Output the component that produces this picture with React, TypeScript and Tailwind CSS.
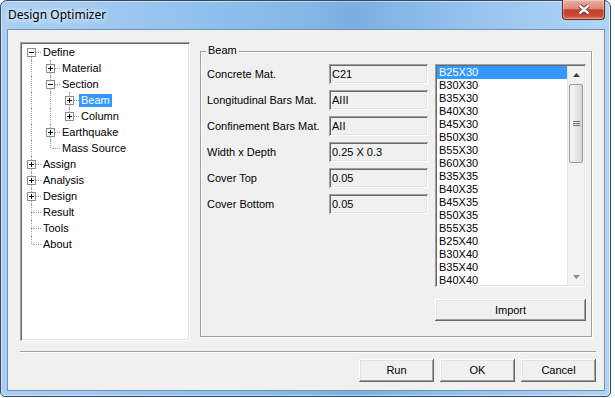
import React from 'react';

const ui = "font-['Liberation_Sans',Arial,sans-serif] text-[11px] text-black";
const sunken =
  'shadow-[inset_1px_1px_0_#a0a0a0,inset_-1px_-1px_0_#ffffff,inset_2px_2px_0_#696969,inset_-2px_-2px_0_#e3e3e3]';
const raised =
  'shadow-[inset_-1px_-1px_0_#696969,inset_1px_1px_0_#ffffff,inset_-2px_-2px_0_#a0a0a0,inset_2px_2px_0_#e3e3e3]';

type Row = {
  label: string;
  level: number;
  exp?: '+' | '-';
  cont: boolean[];
  up: boolean;
  down: boolean;
  sel?: boolean;
};

const rows: Row[] = [
  { label: 'Define', level: 0, exp: '-', cont: [], up: false, down: true },
  { label: 'Material', level: 1, exp: '+', cont: [true], up: true, down: true },
  { label: 'Section', level: 1, exp: '-', cont: [true], up: true, down: true },
  { label: 'Beam', level: 2, exp: '+', cont: [true, true], up: true, down: true, sel: true },
  { label: 'Column', level: 2, exp: '+', cont: [true, true], up: true, down: false },
  { label: 'Earthquake', level: 1, exp: '+', cont: [true], up: true, down: true },
  { label: 'Mass Source', level: 1, cont: [true], up: true, down: false },
  { label: 'Assign', level: 0, exp: '+', cont: [], up: true, down: true },
  { label: 'Analysis', level: 0, exp: '+', cont: [], up: true, down: true },
  { label: 'Design', level: 0, exp: '+', cont: [], up: true, down: true },
  { label: 'Result', level: 0, cont: [], up: true, down: true },
  { label: 'Tools', level: 0, cont: [], up: true, down: true },
  { label: 'About', level: 0, cont: [], up: true, down: false },
];

const fields = [
  ['Concrete Mat.', 'C21'],
  ['Longitudinal Bars Mat.', 'AIII'],
  ['Confinement Bars Mat.', 'AII'],
  ['Width x Depth', '0.25 X 0.3'],
  ['Cover Top', '0.05'],
  ['Cover Bottom', '0.05'],
];

const sections = [
  'B25X30', 'B30X30', 'B35X30', 'B40X30', 'B45X30', 'B50X30', 'B55X30', 'B60X30',
  'B35X35', 'B40X35', 'B45X35', 'B50X35', 'B55X35', 'B25X40', 'B30X40', 'B35X40', 'B40X40',
];

function Expander({ sign }: { sign: '+' | '-' }) {
  return (
    <span className="absolute left-[5px] top-[4px] w-[9px] h-[9px] border border-[#8c8c8c] bg-white">
      <span className="absolute left-[1px] top-[3px] w-[5px] h-[1px] bg-black" />
      {sign === '+' && <span className="absolute left-[3px] top-[1px] w-[1px] h-[5px] bg-black" />}
    </span>
  );
}

function TreeRow({ row }: { row: Row }) {
  return (
    <div className="flex h-[16px]">
      {row.cont.map((c, i) => (
        <div key={i} className="relative w-[19px] h-[16px] shrink-0">
          {c && <span className="absolute left-[9px] top-0 h-[16px] border-l border-dotted border-[#a0a0a0]" />}
        </div>
      ))}
      <div className="relative w-[19px] h-[16px] shrink-0">
        {row.up && <span className="absolute left-[9px] top-0 h-[8px] border-l border-dotted border-[#a0a0a0]" />}
        {row.down && <span className="absolute left-[9px] top-[8px] h-[8px] border-l border-dotted border-[#a0a0a0]" />}
        <span className="absolute left-[11px] top-[8px] w-[8px] border-t border-dotted border-[#a0a0a0]" />
        {row.exp && <Expander sign={row.exp} />}
      </div>
      <span
        className={
          'mt-[2px] h-[13px] leading-[13px] px-[2px] whitespace-nowrap ' +
          (row.sel ? 'bg-[#3399ff] text-white' : '')
        }
      >
        {row.label}
      </span>
    </div>
  );
}

function Tree() {
  return (
    <div className={`w-[170px] h-[299px] shrink-0 bg-white pt-[2px] pl-[2px] ${sunken}`}>
      {rows.map((r) => (
        <TreeRow key={r.label} row={r} />
      ))}
    </div>
  );
}

function Arrow({ up, color }: { up?: boolean; color: string }) {
  return (
    <svg width="7" height="4" viewBox="0 0 7 4">
      <polygon points={up ? '0,4 7,4 3.5,0' : '0,0 7,0 3.5,4'} fill={color} />
    </svg>
  );
}

function SectionList() {
  return (
    <div className={`h-[223px] flex bg-white p-[2px] ${sunken}`}>
      <div className="flex-1 overflow-hidden">
        {sections.map((s, i) => (
          <div
            key={s}
            className={'h-[13px] leading-[13px] pl-[2px] ' + (i === 0 ? 'bg-[#3399ff] text-white' : '')}
          >
            {s}
          </div>
        ))}
      </div>
      <div className="w-[17px] shrink-0 flex flex-col bg-[#f2f2f2] border-l border-[#e6e6e6]">
        <div className="h-[17px] flex items-center justify-center">
          <Arrow up color="#404040" />
        </div>
        <div className="mt-[1px] mx-[1px] h-[79px] rounded-[2px] border border-[#9a9a9a] bg-[linear-gradient(90deg,#f4f4f4_0%,#e8e8e8_50%,#d6d6d6_100%)] flex flex-col items-center justify-center gap-[1px]">
          <span className="w-[7px] h-[1px] bg-[#6e6e6e]" />
          <span className="w-[7px] h-[1px] bg-[#6e6e6e]" />
          <span className="w-[7px] h-[1px] bg-[#6e6e6e]" />
        </div>
        <div className="flex-1" />
        <div className="h-[17px] flex items-center justify-center">
          <Arrow color="#8a8a8a" />
        </div>
      </div>
    </div>
  );
}

function Button({ label, className }: { label: string; className: string }) {
  return (
    <div className={`flex items-center justify-center bg-[#f0f0f0] ${raised} ${className}`}>{label}</div>
  );
}

function GroupBox() {
  return (
    <div className="relative ml-[10px] mt-[9px] w-[392px] h-[286px] border border-[#a0a0a0] shadow-[1px_1px_0_#ffffff,inset_1px_1px_0_#ffffff]">
      <span className="absolute left-[5px] top-[-8px] h-[13px] leading-[13px] px-[2px] bg-[#f0f0f0]">Beam</span>
      <div className="flex pl-[6px] pt-[12px]">
        <div className="w-[221px] flex flex-col gap-[6px]">
          {fields.map(([label, value]) => (
            <div key={label} className="flex items-center h-[20px]">
              <span className="w-[122px] whitespace-nowrap">{label}</span>
              <div className={`w-[99px] h-[20px] flex items-center pl-[3px] bg-[#f0f0f0] ${sunken}`}>{value}</div>
            </div>
          ))}
        </div>
        <div className="ml-[7px] w-[151px] flex flex-col">
          <SectionList />
          <Button label="Import" className="mt-[12px] h-[22px]" />
        </div>
      </div>
    </div>
  );
}

export default function App() {
  return (
    <div className={`w-[615px] h-[398px] bg-white ${ui}`}>
      <div className="w-[611px] h-[397px] flex flex-col rounded-t-[7px] rounded-b-[5px] border border-[#3a4b5e] pl-[6px] pr-[5px] pb-[5px] bg-[linear-gradient(90deg,#a9cff3_0%,#a3cbf2_12%,#93c2ee_30%,#86b8e8_48%,#7daee1_58%,#8fbeec_72%,#a3cbf2_88%,#b0d4f5_100%)] shadow-[inset_0_0_0_1px_rgba(255,255,255,0.45)]">
        {/* title bar */}
        <div className="h-[28px] shrink-0 flex justify-between">
          <span className="self-center pl-[1px] font-['Noto_Sans',sans-serif] text-[12px] text-black [text-shadow:0_0_6px_#ffffff,0_0_10px_#ffffff]">
            Design Optimizer
          </span>
          <div className="-mt-[1px] w-[43px] h-[20px] rounded-b-[4px] border border-t-0 border-[#6b2b24] bg-[linear-gradient(180deg,#e9b0a3_0%,#dc8a7b_45%,#c7412d_52%,#c84632_80%,#d9795a_100%)] shadow-[inset_0_0_0_1px_rgba(255,255,255,0.35)] flex items-center justify-center">
            <svg width="14" height="11" viewBox="0 0 14 11">
              <path d="M2.5 1.5 L11.5 9.5 M11.5 1.5 L2.5 9.5" stroke="#5b2a24" strokeWidth="4.2" />
              <path d="M2.5 1.5 L11.5 9.5 M11.5 1.5 L2.5 9.5" stroke="#ffffff" strokeWidth="2.4" />
            </svg>
          </div>
        </div>

        {/* client area */}
        <div className="h-[362px] border border-[#7390b3] bg-[#f0f0f0] flex flex-col pl-[12px] pt-[12px] pr-[8px]">
          <div className="flex">
            <Tree />
            <GroupBox />
          </div>

          <div className="mt-[10px] h-[2px] border-t border-[#a0a0a0] border-b border-b-white" />

          <div className="mt-[6px] flex justify-end gap-[6px]">
            <Button label="Run" className="w-[75px] h-[23px]" />
            <Button label="OK" className="w-[75px] h-[23px]" />
            <Button label="Cancel" className="w-[75px] h-[23px]" />
          </div>
        </div>
      </div>
    </div>
  );
}
